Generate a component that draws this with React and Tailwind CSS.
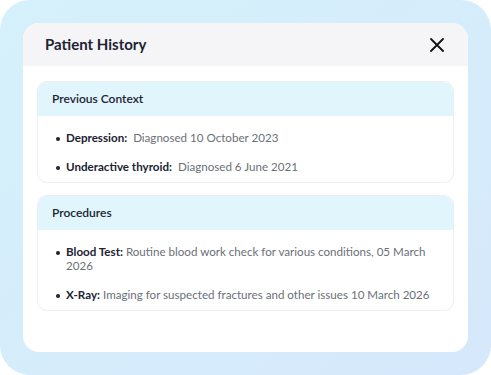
import React from 'react'

const history = [
  {
    title: 'Previous Context',
    items: [
      { label: 'Depression:', text: 'Diagnosed 10 October 2023', gap: true },
      { label: 'Underactive thyroid:', text: 'Diagnosed 6 June 2021', gap: true },
    ],
  },
  {
    title: 'Procedures',
    items: [
      { label: 'Blood Test:', text: 'Routine blood work check for various conditions, 05 March 2026' },
      { label: 'X-Ray:', text: 'Imaging for suspected fractures and other issues 10 March 2026' },
    ],
  },
]

function Section({ title, items }) {
  return (
    <div className="rounded-[10px] border border-[#eceef1] overflow-hidden bg-white">
      <div className="bg-[#e1f5fc] h-[34px] flex items-center px-[14px] text-[12px] font-semibold text-[#1c2333]">{title}</div>
      <ul className="pl-[14px] pr-[10px] pt-[15px] pb-[8px] flex flex-col gap-[15px]">
        {items.map(it => (
          <li key={it.label} className="flex text-[11.6px] leading-[14px]">
            <span className="w-[14px] shrink-0 flex justify-start pl-[4px] pt-[6px]">
              <span className="w-[4px] h-[4px] rounded-full bg-[#1c2333]" />
            </span>
            <span>
              <span className="font-bold text-[#1c2333]">{it.label}</span>
              {it.gap ? '\u00a0 ' : ' '}
              <span className="text-[#6b6f78]">{it.text}</span>
            </span>
          </li>
        ))}
      </ul>
    </div>
  )
}

export default function App(){
  return (
    <div className="w-[491px] h-[375px] bg-white" style={{ fontFamily: 'Lato, "Open Sans", sans-serif' }}>
      <div className="w-full h-full rounded-[30px] bg-gradient-to-br from-[#d5f1fb] to-[#d6e8fb] p-[23px]">
        <div className="w-[445px] h-[329px] rounded-[16px] bg-white overflow-hidden flex flex-col">
          <div className="h-[43px] bg-[#f5f5f7] flex items-center justify-between pl-[22px] pr-[24px]">
            <h2 className="text-[15px] font-bold text-[#1c2333]">Patient History</h2>
            <svg width="14" height="14" viewBox="0 0 14 14" fill="none" stroke="#111" strokeWidth="1.8" strokeLinecap="round">
              <path d="M1 1L13 13M13 1L1 13" />
            </svg>
          </div>
          <div className="px-[14px] pt-[15px] flex flex-col gap-[12px]">
            {history.map(s => <Section key={s.title} {...s} />)}
          </div>
        </div>
      </div>
    </div>
  )
}
